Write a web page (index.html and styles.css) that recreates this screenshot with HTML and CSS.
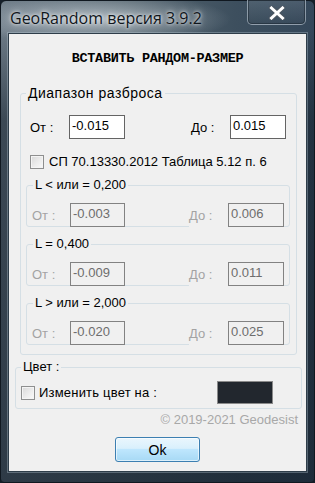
FILE: index.html
```html
<!DOCTYPE html>
<html lang="ru">
<head>
<meta charset="utf-8">
<title>GeoRandom</title>
<link rel="stylesheet" href="styles.css">
</head>
<body>
<div class="window">
  <div class="titlebar">
    <span class="title">GeoRandom версия 3.9.2</span>
    <div class="close">
      <svg width="16" height="14" viewBox="0 0 16 14">
        <path d="M2 1.5 L14 12.5 M14 1.5 L2 12.5" stroke="#4a5560" stroke-width="5" stroke-linecap="square" fill="none"/>
        <path d="M2.5 2 L13.5 12 M13.5 2 L2.5 12" stroke="#ffffff" stroke-width="3" stroke-linecap="square" fill="none"/>
      </svg>
    </div>
  </div>
  <div class="client">
    <h1 class="heading">ВСТАВИТЬ РАНДОМ-РАЗМЕР</h1>

    <fieldset class="group group-range">
      <legend>Диапазон разброса</legend>
      <div class="row row-main">
        <span class="lbl lbl-from">От :</span>
        <span class="input input-from">-0.015</span>
        <span class="lbl lbl-to">До :</span>
        <span class="input input-to">0.015</span>
      </div>
      <div class="check-row check-sp">
        <span class="checkbox"></span>
        <span class="check-text">СП 70.13330.2012 Таблица 5.12 п. 6</span>
      </div>

      <fieldset class="group sub sub-first">
        <legend>L &lt; или = 0,200</legend>
        <div class="row row-sub">
          <span class="lbl lbl-from">От :</span>
          <span class="input input-from">-0.003</span>
          <span class="lbl lbl-to">До :</span>
          <span class="input input-to">0.006</span>
        </div>
      </fieldset>

      <fieldset class="group sub">
        <legend>L = 0,400</legend>
        <div class="row row-sub">
          <span class="lbl lbl-from">От :</span>
          <span class="input input-from">-0.009</span>
          <span class="lbl lbl-to">До :</span>
          <span class="input input-to">0.011</span>
        </div>
      </fieldset>

      <fieldset class="group sub">
        <legend>L &gt; или = 2,000</legend>
        <div class="row row-sub">
          <span class="lbl lbl-from">От :</span>
          <span class="input input-from">-0.020</span>
          <span class="lbl lbl-to">До :</span>
          <span class="input input-to">0.025</span>
        </div>
      </fieldset>
    </fieldset>

    <fieldset class="group group-color">
      <legend>Цвет :</legend>
      <div class="color-row">
        <span class="checkbox"></span>
        <span class="check-text">Изменить цвет на :</span>
        <span class="swatch"></span>
      </div>
    </fieldset>

    <div class="copyright">© 2019-2021 Geodesist</div>

    <div class="actions">
      <button class="ok">Ok</button>
    </div>
  </div>
</div>
</body>
</html>
```

FILE: styles.css
```css
* { box-sizing: border-box; }

html, body {
  margin: 0;
  padding: 0;
  background: #16202a;
}

.window {
  width: 315px;
  height: 483px;
  display: flex;
  flex-direction: column;
  border: 1px solid #101820;
  border-radius: 6px 6px 4px 4px;
  background:
    radial-gradient(ellipse 135px 26px at 95px 18px, rgba(225, 232, 238, 0.6), rgba(225, 232, 238, 0) 100%),
    linear-gradient(to bottom, rgba(0, 0, 0, 0) 0, rgba(0, 0, 0, 0) 30px, rgba(20, 32, 44, 0.55) 120px, rgba(20, 32, 44, 0.7) 100%),
    linear-gradient(to right, #6c7a86 0%, #55656f 40%, #3d4f5e 75%, #34475a 100%);
  font-family: "Liberation Sans", Arial, sans-serif;
  font-size: 13px;
  color: #000;
}

.titlebar {
  height: 32px;
  flex: none;
  display: flex;
  justify-content: space-between;
  align-items: flex-start;
  padding-left: 9px;
  padding-right: 8px;
}

.title {
  font-family: "Open Sans", "Noto Sans", sans-serif;
  font-size: 16px;
  line-height: 20px;
  margin-top: 7px;
  letter-spacing: 0;
  color: #10161c;
  text-shadow: 0 0 6px rgba(255, 255, 255, 0.9), 0 0 3px rgba(255, 255, 255, 0.8);
}

.close {
  width: 59px;
  height: 25px;
  margin-top: -1px;
  display: flex;
  align-items: center;
  justify-content: center;
  border: 1px solid rgba(200, 212, 222, 0.55);
  border-top: none;
  border-radius: 0 0 5px 5px;
  background: linear-gradient(to bottom, rgba(120, 135, 148, 0.35), rgba(60, 76, 90, 0.35));
  box-shadow: inset 0 0 0 1px rgba(20, 30, 40, 0.45);
}

.close svg { display: block; margin-top: 1px; }

.client {
  flex: none;
  height: 439px;
  margin: 0 7px 0 7px;
  background: #f0f0f0;
  border: 1px solid #2e3d49;
  box-shadow: 0 0 0 1px rgba(190, 205, 218, 0.35);
  display: flex;
  flex-direction: column;
}

.heading {
  margin: 17px 0 0 0;
  font-family: "Liberation Mono", "DejaVu Sans Mono", monospace;
  font-weight: bold;
  font-size: 13.5px;
  line-height: 16px;
  letter-spacing: -0.3px;
  text-align: center;
  color: #000;
}

.group {
  margin: 0;
  padding: 0;
  min-width: 0;
  border: 1px solid #d5dfe5;
  border-radius: 3px;
}

.group legend {
  padding: 0 2px;
  margin-left: 5px;
  font-size: 13px;
  line-height: 16px;
  color: #000;
}

.group-range {
  margin: 18px 9px 0 11px;
  padding-bottom: 9px;
}

.group-range > legend { font-size: 14px; letter-spacing: 0.5px; }

.row {
  display: flex;
  align-items: stretch;
  height: 24px;
}

.lbl {
  padding-top: 5px;
  line-height: 16px;
  font-size: 13px;
}

.input {
  display: block;
  height: 24px;
  padding: 2px 1px 0 2px;
  line-height: 16px;
  font-size: 13px;
  background: #fff;
  border: 1px solid #646464;
}

.row-main {
  margin-top: 14px;
  padding-left: 9px;
}

.row-main .lbl-from { width: 39px; }
.row-main .input { width: 56px; }
.row-main .lbl-to { width: 39px; margin-left: 66px; }

.check-row {
  display: flex;
  align-items: center;
}

.check-sp {
  margin-top: 16px;
  padding-left: 9px;
  height: 14px;
}

.checkbox {
  flex: none;
  width: 14px;
  height: 14px;
  border: 1px solid #8e8f8f;
  background: linear-gradient(135deg, #d8d8d8 0%, #ececec 55%, #fafafa 100%);
  box-shadow: inset 0 0 0 1px #f4f4f4;
}

.check-text {
  margin-left: 5px;
  line-height: 16px;
  font-size: 13px;
}

.sub {
  margin: 9px 6px 0 5px;
}

.sub.sub-first { margin-top: 8px; }

.sub legend {
  margin-left: 6px;
}

.row-sub {
  margin-top: 10px;
  margin-bottom: -1px;
  padding-left: 5px;
}

.row-sub .lbl { color: #a3a3a3; }
.row-sub .lbl-from { width: 38px; }
.row-sub .lbl-to {
  width: 39px;
  margin-left: 64px;
  background: #f0f0f0;
}
.row-sub .input {
  background: #f0f0f0;
  border-color: #828282;
  color: #6d6d6d;
}
.row-sub .input-from { width: 55px; }
.row-sub .input-to { width: 56px; }

.group-color {
  margin: 4px 4px 0 6px;
  padding-bottom: 4px;
}

.color-row {
  display: flex;
  align-items: center;
  height: 23px;
  margin-top: 6px;
  padding-left: 5px;
}

.color-row .check-text { margin-left: 4px; letter-spacing: 0.2px; }

.swatch {
  width: 56px;
  height: 23px;
  margin-left: auto;
  margin-right: 28px;
  background: #22272e;
  border: 1px solid #8a8a8a;
}

.copyright {
  margin-top: 3px;
  padding-right: 8px;
  text-align: right;
  font-size: 13px;
  line-height: 16px;
  color: #a8a8a8;
}

.actions {
  display: flex;
  justify-content: center;
  margin-top: 9px;
}

.ok {
  width: 85px;
  height: 25px;
  margin: 0;
  padding: 0;
  font-family: "Liberation Sans", Arial, sans-serif;
  font-size: 14px;
  color: #000;
  border: 1px solid #3c7fb1;
  border-radius: 3px;
  background: linear-gradient(to bottom, #eaf6fd 0%, #d9f0fc 45%, #bee6fd 50%, #a7d9f5 100%);
  box-shadow: inset 0 0 0 1px rgba(255, 255, 255, 0.6);
}
```
